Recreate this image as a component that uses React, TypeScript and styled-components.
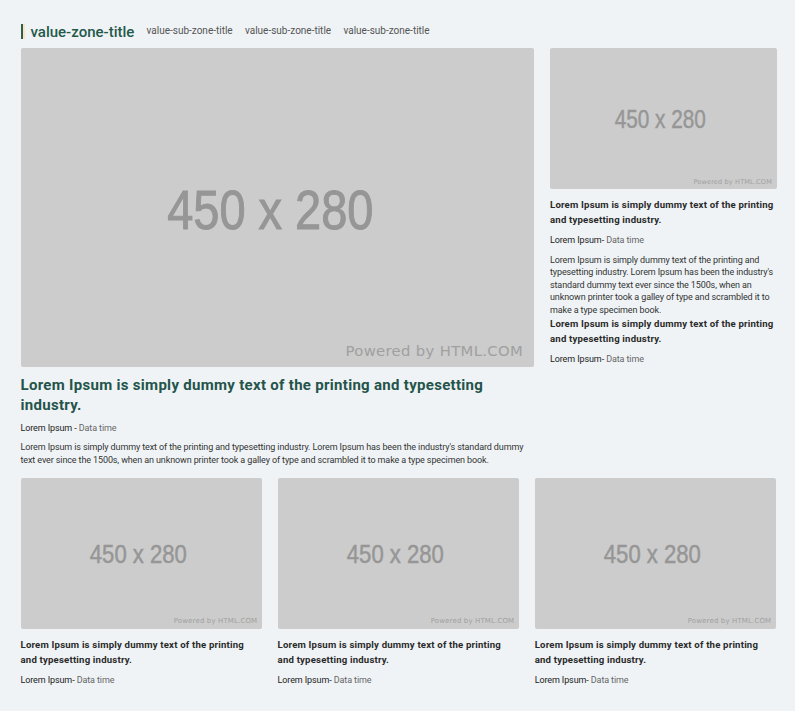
import React from "react";
import styled, { createGlobalStyle } from "styled-components";

const GlobalStyle = createGlobalStyle`
  * { box-sizing: border-box; margin: 0; }
  body {
    margin: 0;
    background: #eff3f6;
    color: #222;
    font-family: Roboto, "Liberation Sans", sans-serif;
  }
`;

const Page = styled.main`
  width: 795px;
  height: 711px;
  padding: 21px 18px 0 20.5px;
  background: #eff3f6;
  overflow: hidden;
`;

const ZoneHeader = styled.header`
  display: flex;
  align-items: center;
  height: 27px;
  padding-bottom: 6px;
`;

const Marker = styled.span`
  width: 4px;
  height: 15px;
  margin-right: 6px;
  border-left: 2px solid #2c5f4c;
  border-right: 2px solid #fae3c1;
`;

const ZoneTitle = styled.h1`
  width: 116px;
  font-size: 15px;
  font-weight: 500;
  line-height: 20px;
  color: #24594a;
`;

const ZoneLinks = styled.nav`
  display: flex;
  gap: 12.3px;
  padding-bottom: 2px;
`;

const ZoneLink = styled.span`
  font-size: 10px;
  line-height: 12px;
  color: #555;
  white-space: nowrap;
`;

const Lead = styled.section`
  display: grid;
  grid-template-columns: 513.5px 227px;
  column-gap: 16px;
  height: 430.4px;
`;

const CardRow = styled.section`
  display: grid;
  grid-template-columns: repeat(3, 241.7px);
  column-gap: 15.4px;
`;

const Article = styled.article`
  min-width: 0;
`;

const Picture = styled.svg`
  display: block;
  width: 100%;
  aspect-ratio: 450 / 279.6;
  border-radius: 2px;
  background: #ccc;
`;

const LeadTitle = styled.h2`
  margin-top: 8px;
  font-size: 15px;
  font-weight: 700;
  line-height: 20px;
  letter-spacing: 0.3px;
  color: #24544a;
  white-space: nowrap;
`;

const CardTitle = styled.h3<{ $top: number }>`
  margin-top: ${(p) => p.$top}px;
  font-size: 9.6px;
  font-weight: 700;
  line-height: 15px;
  letter-spacing: 0.19px;
  color: #2a2a2a;
  white-space: nowrap;
`;

const Meta = styled.p<{ $top: number }>`
  margin-top: ${(p) => p.$top}px;
  font-size: 9px;
  line-height: 12px;
  letter-spacing: -0.11px;
  color: #222;
  white-space: nowrap;
`;

const Time = styled.span`
  color: #666;
`;

const Body = styled.p<{ $top: number }>`
  margin-top: ${(p) => p.$top}px;
  font-size: 9px;
  line-height: 12.4px;
  letter-spacing: -0.115px;
  color: #333;
  white-space: nowrap;
`;

const Placeholder = () => (
  <Picture viewBox="0 0 450 280" role="img" aria-label="450 x 280">
    <text
      x="128"
      y="159"
      fontFamily="Liberation Sans"
      fontSize="49.5"
      textLength="181"
      lengthAdjust="spacingAndGlyphs"
      fill="#969696"
      stroke="#969696"
      strokeWidth="0.9"
    >
      450 x 280
    </text>
    <text x="284.5" y="270" fontFamily="DejaVu Sans" fontSize="13" textLength="155.5" lengthAdjust="spacing" fill="#a0a0a0">
      Powered by HTML.COM
    </text>
  </Picture>
);

const Lines = ({ lines }: { lines: string[] }) => (
  <>
    {lines.map((line, i) => (
      <React.Fragment key={i}>
        {i > 0 && <br />}
        {line}
      </React.Fragment>
    ))}
  </>
);

const shortTitle = ["Lorem Ipsum is simply dummy text of the printing", "and typesetting industry."];

const Heading = ({ top }: { top: number }) => (
  <>
    <CardTitle $top={top}>
      <Lines lines={shortTitle} />
    </CardTitle>
    <Meta $top={7}>
      Lorem Ipsum- <Time>Data time</Time>
    </Meta>
  </>
);

export default function App() {
  return (
    <>
      <GlobalStyle />
      <Page>
        <ZoneHeader>
          <Marker />
          <ZoneTitle>value-zone-title</ZoneTitle>
          <ZoneLinks>
            {[0, 1, 2].map((i) => (
              <ZoneLink key={i}>value-sub-zone-title</ZoneLink>
            ))}
          </ZoneLinks>
        </ZoneHeader>
        <Lead>
          <Article>
            <Placeholder />
            <LeadTitle>
              <Lines lines={["Lorem Ipsum is simply dummy text of the printing and typesetting", "industry."]} />
            </LeadTitle>
            <Meta $top={7}>
              Lorem Ipsum - <Time>Data time</Time>
            </Meta>
            <Body $top={7.2}>
              <Lines
                lines={[
                  "Lorem Ipsum is simply dummy text of the printing and typesetting industry. Lorem Ipsum has been the industry's standard dummy",
                  "text ever since the 1500s, when an unknown printer took a galley of type and scrambled it to make a type specimen book.",
                ]}
              />
            </Body>
          </Article>
          <Article>
            <Placeholder />
            <Heading top={8} />
            <Body $top={8}>
              <Lines
                lines={[
                  "Lorem Ipsum is simply dummy text of the printing and",
                  "typesetting industry. Lorem Ipsum has been the industry's",
                  "standard dummy text ever since the 1500s, when an",
                  "unknown printer took a galley of type and scrambled it to",
                  "make a type specimen book.",
                ]}
              />
            </Body>
            <Heading top={0} />
          </Article>
        </Lead>
        <CardRow>
          {[0, 1, 2].map((i) => (
            <Article key={i}>
              <Placeholder />
              <Heading top={8.5} />
            </Article>
          ))}
        </CardRow>
      </Page>
    </>
  );
}
